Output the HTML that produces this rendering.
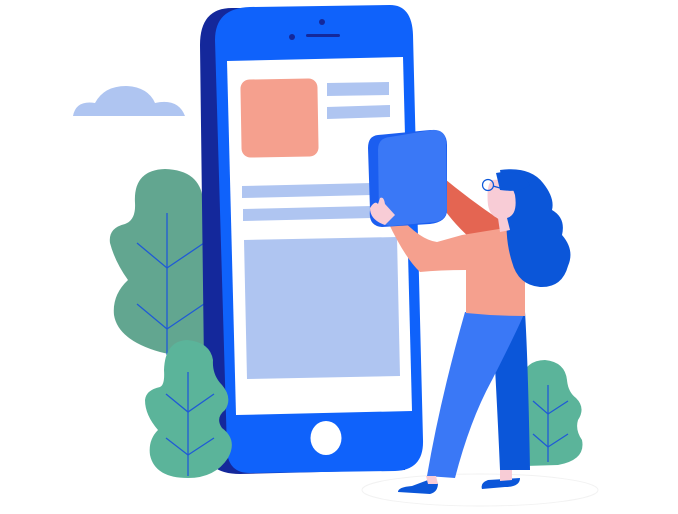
<!DOCTYPE html>
<html><head><style>html,body{margin:0;padding:0;background:#fff;width:678px;height:514px;overflow:hidden}</style></head>
<body>
<svg width="678" height="514" viewBox="0 0 678 514" xmlns="http://www.w3.org/2000/svg">
<path d="M73 116 Q76 100 95 103 Q104 86 126 86 Q148 87 155 103 Q178 98 185 116 Z" fill="#afc5f1"/>
<ellipse cx="480" cy="490" rx="118" ry="16" fill="none" stroke="#f2f2f2" stroke-width="1"/>
<path d="M165 169 Q200 170 203 200 Q203 225 210 240 L210 355 Q190 360 160 352 Q118 340 114 315 Q112 295 128 280 Q115 262 110 243 Q108 228 125 224 Q136 220 135 203 Q133 170 165 169 Z" fill="#62a690"/>
<g stroke="#1f5ad6" stroke-width="1.3" fill="none">
<path d="M167 213 V355"/><path d="M137 243 L167 268 L204 243"/><path d="M137 304 L167 329 L204 304"/>
</g>
<path d="M545 360 Q565 362 567 380 Q568 392 576 398 Q586 408 578 420 Q575 430 582 440 Q586 460 558 465 L525 466 L520 380 Q526 360 545 360 Z" fill="#5bb49a"/>
<g stroke="#1f5ad6" stroke-width="1.3" fill="none">
<path d="M548 385 V462"/><path d="M533 401 L548 414 L568 401"/><path d="M533 434 L548 447 L568 434"/>
</g>
<path d="M232 8 L400 8 L405 470 L240 474 Q205 474 205 445 L200 45 Q200 8 232 8 Z" fill="#14289b"/>
<path d="M250 7 L390 5 Q412 5 413 35 L423 440 Q424 470 395 471 L250 473 Q228 473 227 450 L215 40 Q215 8 250 7 Z" fill="#0f62fb"/>
<path d="M227 61 L403 57 L412 411 L236 415 Z" fill="#fff"/>
<rect x="241" y="79" width="77" height="78" rx="9" fill="#f5a08e" transform="rotate(-1 280 118)"/>
<path d="M327 83 L389 82 L389 95 L327 96 Z" fill="#afc5f1"/>
<path d="M327 107 L390 105 L390 117 L327 119 Z" fill="#afc5f1"/>
<path d="M242 186 L372 183 L372 195 L242 198 Z" fill="#afc5f1"/>
<path d="M243 209 L372 206 L372 218 L243 221 Z" fill="#afc5f1"/>
<path d="M244 240 L397 237 L400 376 L247 379 Z" fill="#afc5f1"/>
<circle cx="322" cy="22" r="3" fill="#14289b"/>
<circle cx="292" cy="37" r="3" fill="#14289b"/>
<rect x="306" y="34" width="34" height="3" rx="1.5" fill="#14289b"/>
<ellipse cx="326" cy="438" rx="15.5" ry="17" fill="#fff"/>
<path d="M187 340 Q210 342 213 360 Q212 375 222 385 Q233 398 225 410 Q215 418 222 428 Q238 440 228 458 Q215 478 188 478 Q155 478 150 455 Q148 440 158 430 Q145 415 145 400 Q146 390 160 387 Q165 385 164 370 Q165 341 187 340 Z" fill="#5bb49a"/>
<g stroke="#1f5ad6" stroke-width="1.3" fill="none">
<path d="M188 372 V476"/><path d="M166 394 L188 412 L214 394"/><path d="M166 438 L188 455 L214 438"/>
</g>
<path d="M440 175 Q470 200 500 220 L505 240 L470 238 Q450 220 438 200 Z" fill="#e46552"/>
<path d="M492 314 L525 312 Q528 360 530 470 L500 470 Q497 400 492 314 Z" fill="#0b56d9"/>
<path d="M465 312 L525 312 Q515 335 492 380 Q470 420 455 478 L427 476 Q440 400 465 312 Z" fill="#3a78f6"/>
<path d="M428 480 L438 483 Q438 492 430 494 L398 492 Q398 487 412 486 Z" fill="#0b56d9"/>
<path d="M488 480 L520 478 Q520 487 505 487 L482 489 Q480 483 488 480 Z" fill="#0b56d9"/>
<path d="M426 476 L436 476 L438 484 L428 484 Z" fill="#f8ccd6"/>
<path d="M500 470 L512 470 L512 480 L500 481 Z" fill="#f8ccd6"/>
<path d="M462 235 L505 228 Q523 240 525 260 L525 316 Q495 316 466 313 L466 270 Q440 270 420 272 Q405 258 388 222 L398 215 Q420 240 437 242 Z" fill="#f5a08e"/>
<path d="M500 170 Q530 166 543 183 Q555 198 552 210 Q566 218 562 235 Q575 250 568 266 Q562 288 540 287 Q518 285 512 262 Q505 240 507 215 Z" fill="#0b56d9"/>
<path d="M492 180 Q510 178 515 195 Q518 215 507 218 L510 230 L500 232 L498 218 Q490 216 488 205 Q486 185 492 180 Z" fill="#f8ccd6"/>
<path d="M496 173 Q520 168 530 185 Q520 193 500 190 Z" fill="#0b56d9"/>
<circle cx="488" cy="185" r="5.5" fill="none" stroke="#0b56d9" stroke-width="1.2"/>
<path d="M493 186 L507 190" stroke="#0b56d9" stroke-width="1.2"/>
<path d="M378 135 L430 130 Q447 129 447 145 L447 210 Q447 222 430 224 L382 227 Q368 226 370 210 L368 148 Q368 136 378 135 Z" fill="#1b5ef0"/>
<path d="M390 137 L432 130 Q446 129 446 143 L447 208 Q447 220 435 222 L392 226 Q379 226 379 212 L378 150 Q378 138 390 137 Z" fill="#3a78f6"/>
<path d="M370 208 Q375 200 378 204 L380 198 Q384 196 385 204 L395 215 L385 225 Q370 220 370 208 Z" fill="#f8ccd6"/>
</svg>
</body></html>
